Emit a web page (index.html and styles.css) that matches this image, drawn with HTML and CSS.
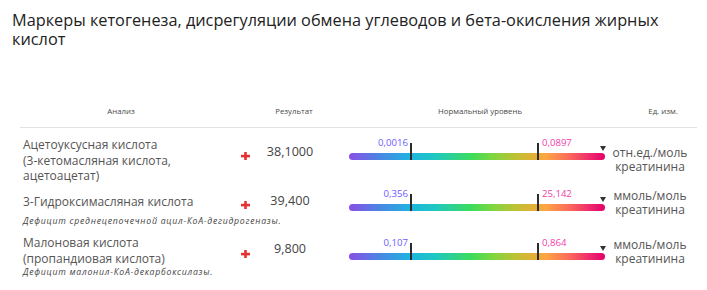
FILE: index.html
```html
<!DOCTYPE html>
<html lang="ru">
<head>
<meta charset="utf-8">
<link rel="stylesheet" href="styles.css">
</head>
<body>
<div class="page">
  <h1 class="title">Маркеры кетогенеза, дисрегуляции обмена углеводов и бета-окисления жирных кислот</h1>
  <div class="table">
    <div class="row head">
      <div class="h h-name">Анализ</div>
      <div class="h"></div>
      <div class="h h-res">Результат</div>
      <div class="h h-bar">Нормальный уровень</div>
      <div class="h h-unit">Ед. изм.</div>
    </div>

    <div class="row r1">
      <div class="name"><div class="nm">Ацетоуксусная кислота <span class="nw">(3-кетомасляная</span> кислота, ацетоацетат)</div></div>
      <div class="plus"><svg width="9" height="8" viewBox="0 0 9 8"><rect x="0" y="2.8" width="9" height="2.6" fill="#e53232"/><rect x="3.2" y="0" width="2.6" height="8" fill="#e53232"/></svg></div>
      <div class="res">38,1000</div>
      <div class="scale-cell">
        <div class="scale">
          <span class="lo" style="right:75.8%">0,0016</span>
          <span class="hi" style="left:74.2%">0,0897</span>
          <span class="tick" style="left:24.2%"></span>
          <span class="tick" style="left:73.8%"></span>
          <span class="tri"></span>
        </div>
      </div>
      <div class="unit">отн.ед./моль<br>креатинина</div>
    </div>

    <div class="row r2">
      <div class="name"><div class="nm">3-Гидроксимасляная кислота</div><div class="note">Дефицит среднецепочечной ацил-КоА-дегидрогеназы.</div></div>
      <div class="plus"><svg width="9" height="8" viewBox="0 0 9 8"><rect x="0" y="2.8" width="9" height="2.6" fill="#e53232"/><rect x="3.2" y="0" width="2.6" height="8" fill="#e53232"/></svg></div>
      <div class="res">39,400</div>
      <div class="scale-cell">
        <div class="scale">
          <span class="lo" style="right:75.8%">0,356</span>
          <span class="hi" style="left:74.2%">25,142</span>
          <span class="tick" style="left:24.2%"></span>
          <span class="tick" style="left:73.8%"></span>
          <span class="tri"></span>
        </div>
      </div>
      <div class="unit">ммоль/моль<br>креатинина</div>
    </div>

    <div class="row r3">
      <div class="name"><div class="nm">Малоновая кислота (пропандиовая кислота)</div><div class="note">Дефицит малонил-КоА-декарбоксилазы.</div></div>
      <div class="plus"><svg width="9" height="8" viewBox="0 0 9 8"><rect x="0" y="2.8" width="9" height="2.6" fill="#e53232"/><rect x="3.2" y="0" width="2.6" height="8" fill="#e53232"/></svg></div>
      <div class="res">9,800</div>
      <div class="scale-cell">
        <div class="scale">
          <span class="lo" style="right:75.8%">0,107</span>
          <span class="hi" style="left:74.2%">0,864</span>
          <span class="tick" style="left:24.2%"></span>
          <span class="tick" style="left:73.8%"></span>
          <span class="tri"></span>
        </div>
      </div>
      <div class="unit">ммоль/моль<br>креатинина</div>
    </div>
  </div>
</div>
</body>
</html>
```

FILE: styles.css
```css
* { box-sizing: border-box; }
html, body { margin: 0; padding: 0; background: #fff; }
body { font-family: "Open Sans", "Noto Sans", sans-serif; color: #555; width: 707px; height: 290px; overflow: hidden; }

.page { padding: 11px 10px 0 0; }

.title {
  margin: 0 0 0 12px;
  font-size: 16.3px;
  line-height: 19px;
  font-weight: 500;
  color: #222;
  width: 670px;
}

.table { margin: 57px 0 0 20px; width: 677px; }

.row {
  display: grid;
  grid-template-columns: 212px 26px 64px 290px 85px;
  align-items: center;
}

.head { border-bottom: 1.5px solid #e2e2e2; padding-bottom: 11px; align-items: start; }
.h { font-size: 7.8px; line-height: 10px; color: #4a4a4a; text-align: center; }
.h-name { padding-right: 10px; }
.h-res { padding-left: 8px; }
.h-bar { padding-left: 26px; }
.h-unit { padding-left: 17px; }

.r1 { grid-template-rows: 58px; }
.r2 { grid-template-rows: 38px; }
.r3 { grid-template-rows: 60px; }

.name { padding-left: 3px; margin-top: 7px; }
.r2 .name { margin-top: 11px; }
.r3 .name { margin-top: 5px; }
.nm { font-size: 12px; line-height: 15.5px; color: #555; width: 199px; }
.nw { white-space: nowrap; }
.note {
  font-size: 8.7px;
  line-height: 11px;
  font-style: italic;
  color: #444;
  white-space: nowrap;
  margin-top: 6px;
  letter-spacing: 0.75px;
}
.r3 .note { margin-top: 1px; }

.plus { display: flex; justify-content: center; margin-bottom: 2px; }
.r2 .plus, .r3 .plus { margin-bottom: 0; }
.plus svg { display: block; }

.res { text-align: center; font-size: 12.6px; line-height: 16px; color: #444; margin-bottom: 10px; }
.r2 .res { margin-bottom: 8px; }

.scale-cell { padding-left: 27px; }
.r1 .scale-cell { margin-bottom: 2px; }
.r2 .scale-cell, .r3 .scale-cell { margin-top: 4px; }

.scale {
  position: relative;
  width: 256px;
  height: 7px;
  border-radius: 4px;
  background: linear-gradient(90deg, #8a4ee6 0%, #4a86e4 12%, #1fb4e0 24%, #20c8c0 34%, #3ddc5a 48%, #7ed640 56%, #c4bf34 66%, #e6ae34 73%, #ffa444 77%, #fb6a5c 86%, #ee2a6c 94%, #e4006a 100%);
}

.lo, .hi {
  position: absolute;
  bottom: 12px;
  font-size: 9.6px;
  line-height: 11px;
  white-space: nowrap;
  margin-right: 3px;
}
.lo { color: #6a5cff; }
.hi { color: #f03cac; margin-left: 3px; }

.tick {
  position: absolute;
  top: -10px;
  width: 1.6px;
  height: 17px;
  background: #2a2a2a;
  margin-left: -0.8px;
}

.tri {
  position: absolute;
  right: -1px;
  top: -7px;
  width: 0;
  height: 0;
  border-left: 3px solid transparent;
  border-right: 3px solid transparent;
  border-top: 5px solid #333;
}

.unit { font-size: 12px; line-height: 14px; color: #555; text-align: center; width: 76px; white-space: nowrap; }
.r2 .unit, .r3 .unit { margin-bottom: 5px; }
.r1 .unit { margin-top: 5px; }
```
